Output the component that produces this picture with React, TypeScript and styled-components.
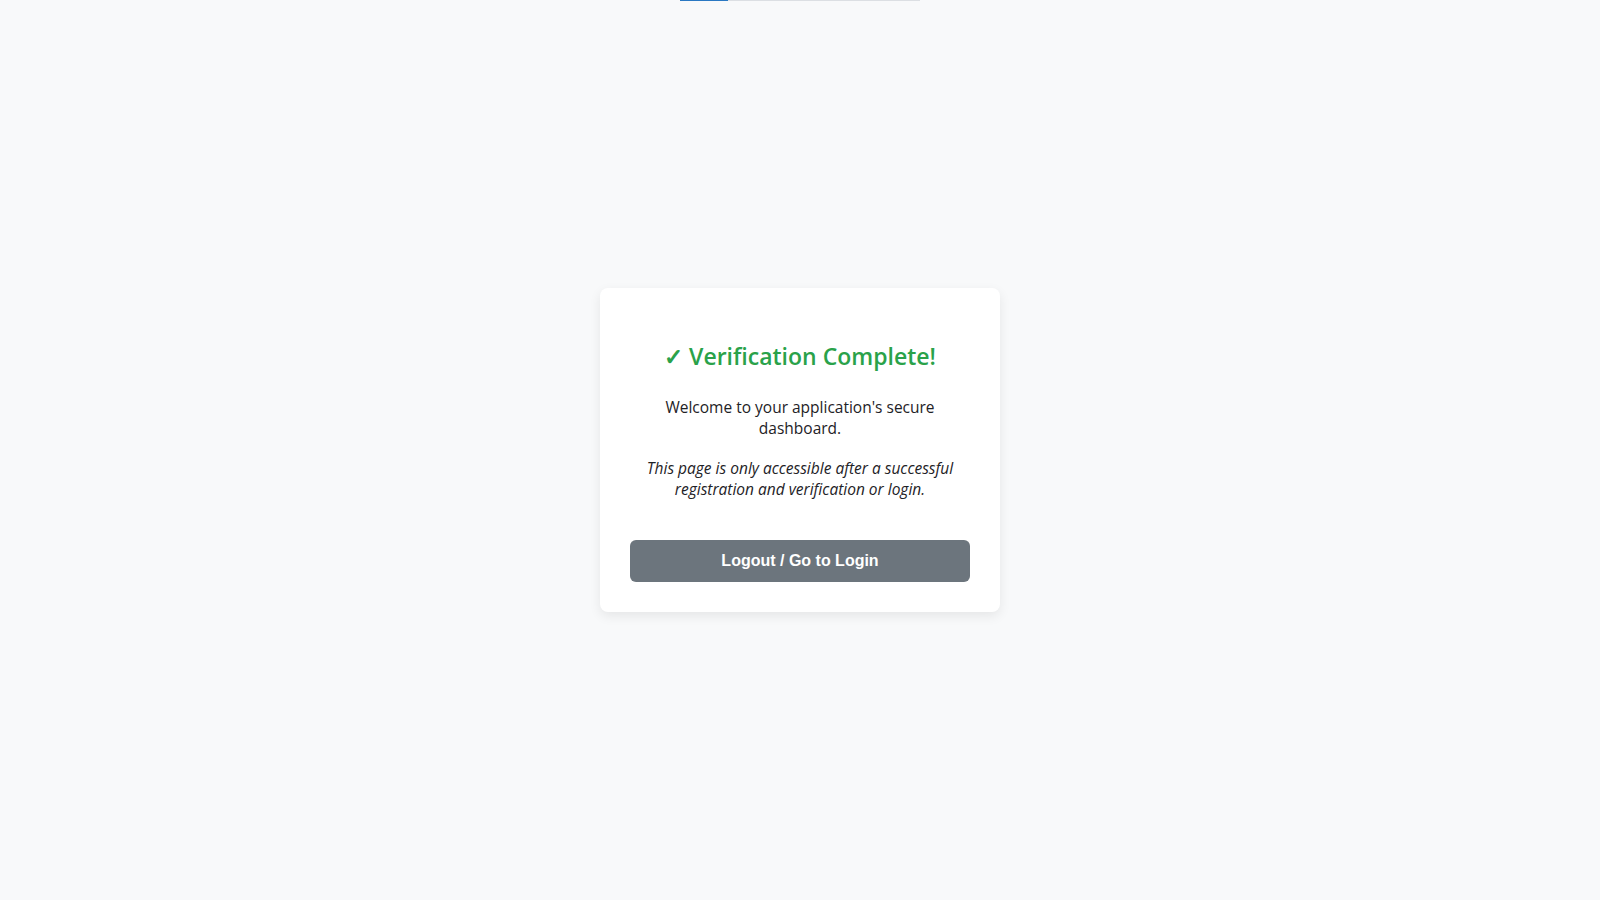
import React from 'react';
import styled, { createGlobalStyle } from 'styled-components';

const GlobalStyle = createGlobalStyle`
  html, body {
    margin: 0;
    padding: 0;
    background: #f8f9fa;
    font-family: 'Open Sans', 'Noto Sans', sans-serif;
    color: #1e2226;
  }
`;

const Page = styled.div`
  position: relative;
  height: 900px;
  display: flex;
  align-items: center;
  justify-content: center;
`;

const ProgressTrack = styled.div`
  position: absolute;
  top: 0;
  left: 680px;
  width: 240px;
  height: 1px;
  background: #dcdfe3;
`;

const ProgressFill = styled.div`
  height: 100%;
  background: #2a78c2;
`;

const Card = styled.div`
  box-sizing: border-box;
  width: 400px;
  padding: 30px;
  background: #ffffff;
  border-radius: 8px;
  box-shadow: 0 4px 12px rgba(0, 0, 0, 0.08);
  text-align: center;
`;

const Title = styled.h2`
  margin: 22px 0 25px;
  font-size: 23px;
  font-weight: 600;
  line-height: 32px;
  color: #2aa24a;
`;

const Text = styled.p<{ $italic?: boolean }>`
  margin: 20px auto;
  max-width: 320px;
  font-size: 15.5px;
  line-height: 20.5px;
  font-style: ${(p) => (p.$italic ? 'italic' : 'normal')};
`;

const Button = styled.button`
  display: block;
  width: 100%;
  height: 42px;
  margin-top: 41px;
  border: none;
  border-radius: 6px;
  background: #6c757d;
  color: #ffffff;
  font-family: 'Liberation Sans', Arial, sans-serif;
  font-size: 16px;
  font-weight: 700;
  cursor: pointer;
`;

export default function App() {
  const progress = 20;
  return (
    <>
      <GlobalStyle />
      <Page>
        <ProgressTrack>
          <ProgressFill style={{ width: `${progress}%` }} />
        </ProgressTrack>
        <Card>
          <Title>✓ Verification Complete!</Title>
          <Text>Welcome to your application's secure dashboard.</Text>
          <Text $italic>This page is only accessible after a successful registration and verification or login.</Text>
          <Button>Logout / Go to Login</Button>
        </Card>
      </Page>
    </>
  );
}
